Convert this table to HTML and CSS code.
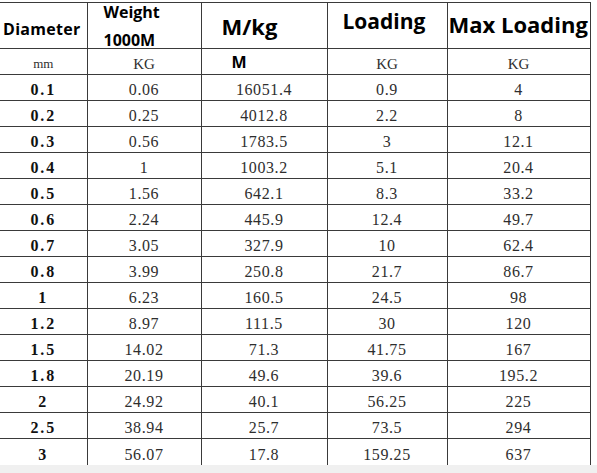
FILE: index.html
```html
<!DOCTYPE html>
<html>
<head>
  <meta charset="UTF-8">
  <meta name="viewport" content="width=device-width, initial-scale=1.0">
  <title>Wire rope specification</title>
  <link rel="stylesheet" href="styles.css">
</head>
<body>
  <div class="sheet">
    <table class="spec">
      <colgroup>
        <col class="col-dia">
        <col class="col-weight">
        <col class="col-mkg">
        <col class="col-load">
        <col class="col-max">
      </colgroup>
      <thead>
        <tr class="head-row">
          <th class="h-dia">Diameter</th>
          <th class="h-weight">
            <div class="stack">
              <div>Weight</div>
              <div class="stack-second">1000M</div>
            </div>
          </th>
          <th class="h-mkg">M/kg</th>
          <th class="h-load">Loading</th>
          <th class="h-max">Max Loading</th>
        </tr>
        <tr class="unit-row">
          <td>mm</td>
          <td>KG</td>
          <td class="unit-m">M</td>
          <td>KG</td>
          <td>KG</td>
        </tr>
      </thead>
      <tbody>
        <tr><td>0.1</td><td>0.06</td><td>16051.4</td><td>0.9</td><td>4</td></tr>
        <tr><td>0.2</td><td>0.25</td><td>4012.8</td><td>2.2</td><td>8</td></tr>
        <tr><td>0.3</td><td>0.56</td><td>1783.5</td><td>3</td><td>12.1</td></tr>
        <tr><td>0.4</td><td>1</td><td>1003.2</td><td>5.1</td><td>20.4</td></tr>
        <tr><td>0.5</td><td>1.56</td><td>642.1</td><td>8.3</td><td>33.2</td></tr>
        <tr><td>0.6</td><td>2.24</td><td>445.9</td><td>12.4</td><td>49.7</td></tr>
        <tr><td>0.7</td><td>3.05</td><td>327.9</td><td>10</td><td>62.4</td></tr>
        <tr><td>0.8</td><td>3.99</td><td>250.8</td><td>21.7</td><td>86.7</td></tr>
        <tr><td>1</td><td>6.23</td><td>160.5</td><td>24.5</td><td>98</td></tr>
        <tr><td>1.2</td><td>8.97</td><td>111.5</td><td>30</td><td>120</td></tr>
        <tr><td>1.5</td><td>14.02</td><td>71.3</td><td>41.75</td><td>167</td></tr>
        <tr><td>1.8</td><td>20.19</td><td>49.6</td><td>39.6</td><td>195.2</td></tr>
        <tr><td>2</td><td>24.92</td><td>40.1</td><td>56.25</td><td>225</td></tr>
        <tr><td>2.5</td><td>38.94</td><td>25.7</td><td>73.5</td><td>294</td></tr>
        <tr class="last-row"><td>3</td><td>56.07</td><td>17.8</td><td>159.25</td><td>637</td></tr>
      </tbody>
    </table>
  </div>
</body>
</html>
```

FILE: styles.css
```css
:root {
  --line-color: #3a3a3a;
  --text-color: #2e2e2e;
  --strong-color: #111111;
  --page-gray: #f0f0f0;
}

body {
  margin: 0;
  padding: 0;
  background-color: var(--page-gray);
  font-family: "Liberation Serif", "Times New Roman", serif;
  color: var(--text-color);
}

.sheet {
  background-color: #ffffff;
  padding-top: 2px;
}

.spec {
  border-collapse: collapse;
  table-layout: fixed;
  width: 590px;
}

.col-dia { width: 87px; }
.col-weight { width: 114px; }
.col-mkg { width: 126px; }
.col-load { width: 120px; }
.col-max { width: 143px; }

.spec th,
.spec td {
  border: 1px solid var(--line-color);
  padding: 0;
}

.spec tr > :first-child {
  border-left: none;
}

.spec .last-row td {
  border-bottom: none;
}

/* header row */

.head-row {
  height: 46px;
}

.head-row th {
  font-family: "Open Sans", "Noto Sans", sans-serif;
  font-weight: 700;
  color: #000000;
  line-height: 1;
  text-align: left;
  vertical-align: top;
  white-space: nowrap;
  overflow: hidden;
}

.h-dia {
  font-size: 16px;
  padding: 18px 0 0 3px !important;
  letter-spacing: 0.3px;
}

.h-weight {
  font-size: 16px;
  padding: 1px 0 0 16px !important;
  overflow: visible !important;
}

.stack {
  height: 43px;
}

.stack-second {
  margin-top: 12px;
}

.h-mkg {
  font-size: 22px;
  padding: 12px 0 0 20px !important;
}

.h-load {
  font-size: 21px;
  padding: 8px 0 0 15px !important;
}

.h-max {
  font-size: 22px;
  padding: 10px 0 0 1px !important;
}

/* unit row + data rows */

.unit-row,
.spec tbody tr {
  height: 26px;
}

.unit-row td,
.spec tbody td {
  font-size: 16px;
  line-height: 20px;
  text-align: center;
  vertical-align: bottom;
  letter-spacing: 0.6px;
}

.unit-row td {
  font-size: 15px;
  letter-spacing: 0;
}

.unit-row td:first-child {
  font-size: 13px;
}

.unit-row .unit-m {
  font-family: "Open Sans", "Noto Sans", sans-serif;
  font-weight: 700;
  font-size: 16px;
  color: #000000;
  text-align: left;
  padding-left: 30px;
  vertical-align: middle;
}

.spec tbody td:first-child {
  font-weight: 700;
  color: var(--strong-color);
  letter-spacing: 1.8px;
}
```
